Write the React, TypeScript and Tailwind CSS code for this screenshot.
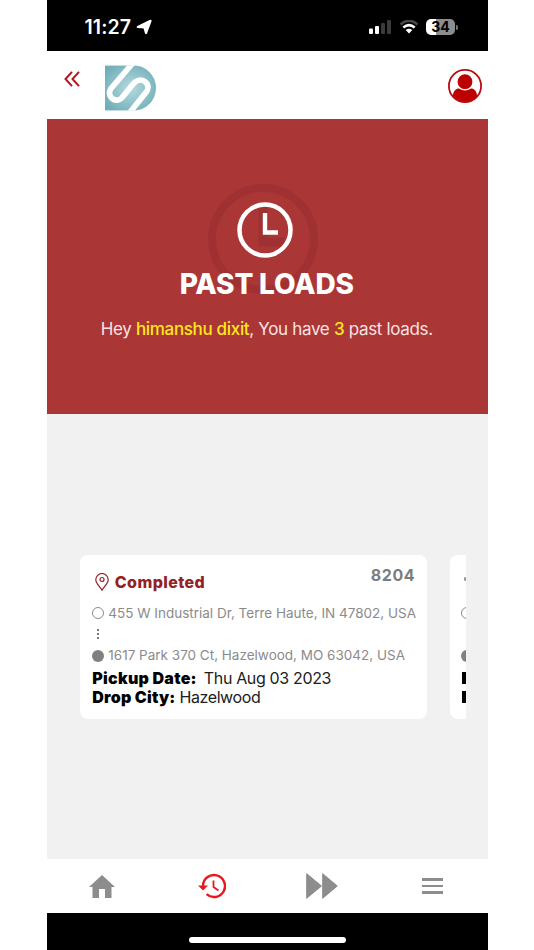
type LoadCardProps = {
  id: string
  status: string
  origin: string
  destination: string
  pickupDate: string
  dropCity: string
}

const loads: LoadCardProps[] = [
  {
    id: "8204",
    status: "Completed",
    origin: "455 W Industrial Dr, Terre Haute, IN 47802, USA",
    destination: "1617 Park 370 Ct, Hazelwood, MO 63042, USA",
    pickupDate: "Thu Aug 03 2023",
    dropCity: "Hazelwood",
  },
]

function StatusBar() {
  return (
    <div className="flex h-[51px] items-center bg-black pt-[3px] pr-[30px] pl-[38px] text-white">
      <span className="w-[48px] text-[19.500px] leading-6 font-semibold tracking-[0.1px] whitespace-nowrap">
        11:27
      </span>
      <svg viewBox="0 0 16 16" className="ml-[3px] h-4 w-4" fill="currentColor">
        <path
          d="M14.500 1.800 10 14 8.400 8.500 1.800 8Z"
          stroke="currentColor"
          strokeWidth="2.200"
          strokeLinejoin="round"
        />
      </svg>
      <svg viewBox="0 0 22 14" className="ml-auto h-3.5 w-[22px]">
        <rect x="0" y="8.500" width="4" height="5.500" rx="1" fill="#fff" />
        <rect x="6" y="6" width="4" height="8" rx="1" fill="#fff" />
        <rect x="12" y="3" width="4" height="11" rx="1" fill="#3c3c3c" />
        <rect x="18" y="0" width="4" height="14" rx="1" fill="#3c3c3c" />
      </svg>
      <svg viewBox="0 0 20 14" className="ml-2 h-3.5 w-5" fill="none">
        <path d="M1.500 4.500Q10-3 18.500 4.500" stroke="#484848" strokeWidth="2.500" />
        <path d="M4.300 7.600Q10 2.800 15.700 7.600" stroke="#fff" strokeWidth="2.600" />
        <path d="M6.700 10Q10 7.300 13.300 10L10 13.600Z" fill="#fff" />
      </svg>
      <div className="ml-[7px] flex items-center">
        <div className="flex h-[16px] w-[29px] items-center justify-center rounded-[5px] bg-[linear-gradient(90deg,#fff_36%,#8d8d8d_36%)] text-[14px] leading-4 font-bold text-black">
          34
        </div>
        <div className="ml-px h-[5px] w-[2px] rounded-r bg-[#777]" />
      </div>
    </div>
  )
}

function Logo() {
  return (
    <svg viewBox="177 195 153 136" className="h-[46px] w-[51px]">
      <defs>
        <radialGradient id="logo" cx="50%" cy="50%" r="62%">
          <stop offset="0%" stopColor="#b4dade" />
          <stop offset="100%" stopColor="#70adb8" />
        </radialGradient>
        <clipPath id="logo-shape">
          <path d="M177 195H262A68 68 0 0 1 262 331H177Z" />
        </clipPath>
      </defs>
      <g clipPath="url(#logo-shape)">
        <path d="M177 195H330V331H177Z" fill="url(#logo)" />
        <path
          d="M264 184 194 266C184 282 198 302 216 299C224 298 228 292 233 286L262 250C270 241 283 235 296 243C308 251 309 265 300 276L247 342"
          fill="none"
          stroke="#fff"
          strokeWidth="17"
        />
      </g>
    </svg>
  )
}

function Header() {
  return (
    <header className="flex h-[68px] items-start bg-white pr-[6px] pl-[17.500px]">
      <svg
        viewBox="0 0 16 16"
        className="mt-[20px] h-4 w-4"
        fill="none"
        stroke="#b5161d"
        strokeWidth="2"
      >
        <path d="M8 .8 1.500 8 8 15.200M15 .8 8.500 8 15 15.200" />
      </svg>
      <div className="mt-[14px] ml-[24.500px]">
        <Logo />
      </div>
      <svg viewBox="0 0 34 34" className="mt-[18px] ml-auto h-[34px] w-[34px]">
        <clipPath id="avatar">
          <circle cx="17" cy="17" r="16" />
        </clipPath>
        <circle cx="17" cy="12.700" r="7.400" fill="#bd0000" />
        <path
          d="M5 30V27C5 22 8 19.500 11 19.500Q17 23.500 23 19.500C26 19.500 29 22 29 27V34H5Z"
          fill="#bd0000"
          clipPath="url(#avatar)"
        />
        <circle cx="17" cy="17" r="16.100" fill="none" stroke="#b90c10" strokeWidth="1.800" />
      </svg>
    </header>
  )
}

function Hero() {
  return (
    <section className="relative flex h-[295px] flex-col items-center bg-[#ab3636] pr-[5px] pt-[83px] text-white">
      <svg
        viewBox="0 0 110 110"
        className="absolute top-[65px] left-[161px] h-[110px] w-[110px]"
        fill="none"
        stroke="#9f3133"
        strokeWidth="8"
      >
        <circle cx="55" cy="55" r="51" />
        <path d="M55 21V58H76" strokeWidth="9" />
      </svg>
      <svg
        viewBox="0 0 56 56"
        className="relative h-14 w-14"
        fill="none"
        stroke="currentColor"
        strokeWidth="4.500"
      >
        <circle cx="28" cy="28" r="25.500" />
        <path d="M28 11V30.500H41" strokeWidth="4.400" />
      </svg>
      <h1 className="relative mt-[6px] pl-[4px] text-[28px] leading-10 font-extrabold tracking-[-0.2px] whitespace-nowrap">
        PAST LOADS
      </h1>
      <p className="mt-[11px] pl-[4px] text-[17px] leading-7 tracking-[-0.330px] whitespace-nowrap text-[#f8e3e3]">
        Hey <span className="font-medium text-[#ffe81a]">himanshu dixit</span>, You have{" "}
        <span className="font-medium text-[#ffe81a]">3</span> past loads.
      </p>
    </section>
  )
}

function LoadCard({ id, status, origin, destination, pickupDate, dropCity }: LoadCardProps) {
  return (
    <article className="h-[164px] w-[347px] shrink-0 rounded-[8px] bg-white px-3 whitespace-nowrap">
      <div className="flex h-[48px] justify-between">
        <div className="flex items-center pt-[6px] text-[#932126]">
          <svg
            viewBox="0 0 14 18"
            className="ml-[3px] h-[18px] w-[14px]"
            fill="none"
            stroke="currentColor"
            strokeWidth="1.200"
          >
            <path d="M7 17.200C5 13.500.8 10.500.8 6.700a6.200 6.200 0 0 1 12.400 0C13.200 10.500 9 13.500 7 17.200Z" />
            <circle cx="7" cy="6.500" r="2" />
          </svg>
          <span className="ml-[5.500px] text-[16px] leading-5 font-extrabold tracking-[0.400px]">
            {status}
          </span>
        </div>
        <span className="mt-[10px] text-[16px] leading-5 font-bold tracking-[0.6px] text-[#7c7c7c]">
          {id}
        </span>
      </div>
      <div className="flex h-[21px] items-center text-[13.500px] text-[#8b8b8b]">
        <div className="mr-1 h-3 w-3 shrink-0 rounded-full border border-[#8b8b8b]" />
        {origin}
      </div>
      <div className="flex h-[21px] flex-col justify-center gap-[2px] pl-[5px]">
        <div className="h-[2px] w-[2px] bg-[#777]" />
        <div className="h-[2px] w-[2px] bg-[#777]" />
        <div className="h-[2px] w-[2px] bg-[#777]" />
      </div>
      <div className="flex h-[22px] items-center text-[13.500px] text-[#8b8b8b]">
        <div className="mr-1 h-3 w-3 shrink-0 rounded-full bg-[#808080]" />
        {destination}
      </div>
      <p className="mt-px text-[16px] leading-5 tracking-[-0.350px] text-[#202020]">
        <b className="mr-[7px] font-black tracking-[0.250px] text-black">Pickup Date:</b>
        {pickupDate}
      </p>
      <p className="text-[16px] leading-[19px] tracking-[-0.400px] text-[#202020]">
        <b className="mr-1 font-black tracking-[0.200px] text-black">Drop City:</b>
        {dropCity}
      </p>
    </article>
  )
}

// Only the left edge of the next card shows beside the current one
function NextCardPeek() {
  return (
    <article className="h-[164px] w-[16px] shrink-0 overflow-hidden rounded-l-[8px] bg-white pl-[11.500px]">
      <div className="flex h-[48px] items-center">
        <div className="ml-[3px] h-1 w-1 rounded-full bg-[#999]" />
      </div>
      <div className="flex h-[21px] items-center">
        <div className="h-3 w-3 shrink-0 rounded-full border border-[#8b8b8b]" />
      </div>
      <div className="mt-[21px] flex h-[22px] items-center">
        <div className="h-3 w-3 shrink-0 rounded-full bg-[#808080]" />
      </div>
      <div className="mt-[5px] ml-px h-[12px] w-[4px] bg-black" />
      <div className="mt-[7px] ml-px h-[12px] w-[4px] bg-black" />
    </article>
  )
}

function BottomNav() {
  return (
    <nav className="grid h-[54px] grid-cols-4 items-center justify-items-center bg-white text-[#8d8d8d]">
      <svg viewBox="0 0 26 23" className="h-[23px] w-[26px]" fill="currentColor">
        <path d="M13 0 26 12H22.500V23H16V14H10V23H3.500V12H0Z" />
      </svg>
      <svg
        viewBox="0 0 28 26"
        className="h-[26px] w-[28px]"
        fill="none"
        stroke="#e5191f"
        strokeWidth="2.500"
      >
        <path d="M5 13A11 11 0 1 1 8.600 21.200" />
        <path d="M0 12.500H10L5 17.500Z" fill="#e5191f" stroke="none" />
        <path d="M15.500 7.500V14L20.500 17.500" strokeWidth="1.800" />
      </svg>
      <svg viewBox="0 0 32 26" className="h-[26px] w-8" fill="currentColor">
        <path
          d="M.7.7 15.500 13 .7 25.300ZM16.700.7 31.300 13 16.700 25.300Z"
          stroke="currentColor"
          strokeLinejoin="round"
        />
      </svg>
      <div className="flex w-[21px] flex-col gap-1">
        <div className="h-[2.500px] bg-[#8d8d8d]" />
        <div className="h-[2.500px] bg-[#8d8d8d]" />
        <div className="h-[2.500px] bg-[#8d8d8d]" />
      </div>
    </nav>
  )
}

export default function App() {
  return (
    <div className="h-[950px] w-[534px] overflow-hidden bg-white pl-[46.500px] font-['Inter',sans-serif]">
      <div className="flex h-full w-[441.500px] flex-col">
        <StatusBar />
        <Header />
        <Hero />
        <main className="h-[445px] bg-[#f1f1f1] pt-[140.500px] pl-[33.800px]">
          <div className="flex gap-[22.700px]">
            {loads.map((load) => (
              <LoadCard key={load.id} {...load} />
            ))}
            <NextCardPeek />
          </div>
        </main>
        <BottomNav />
        <div className="flex h-[37px] justify-center bg-black pt-[24px]">
          <div className="h-[6px] w-[157px] rounded-full bg-white" />
        </div>
      </div>
    </div>
  )
}
